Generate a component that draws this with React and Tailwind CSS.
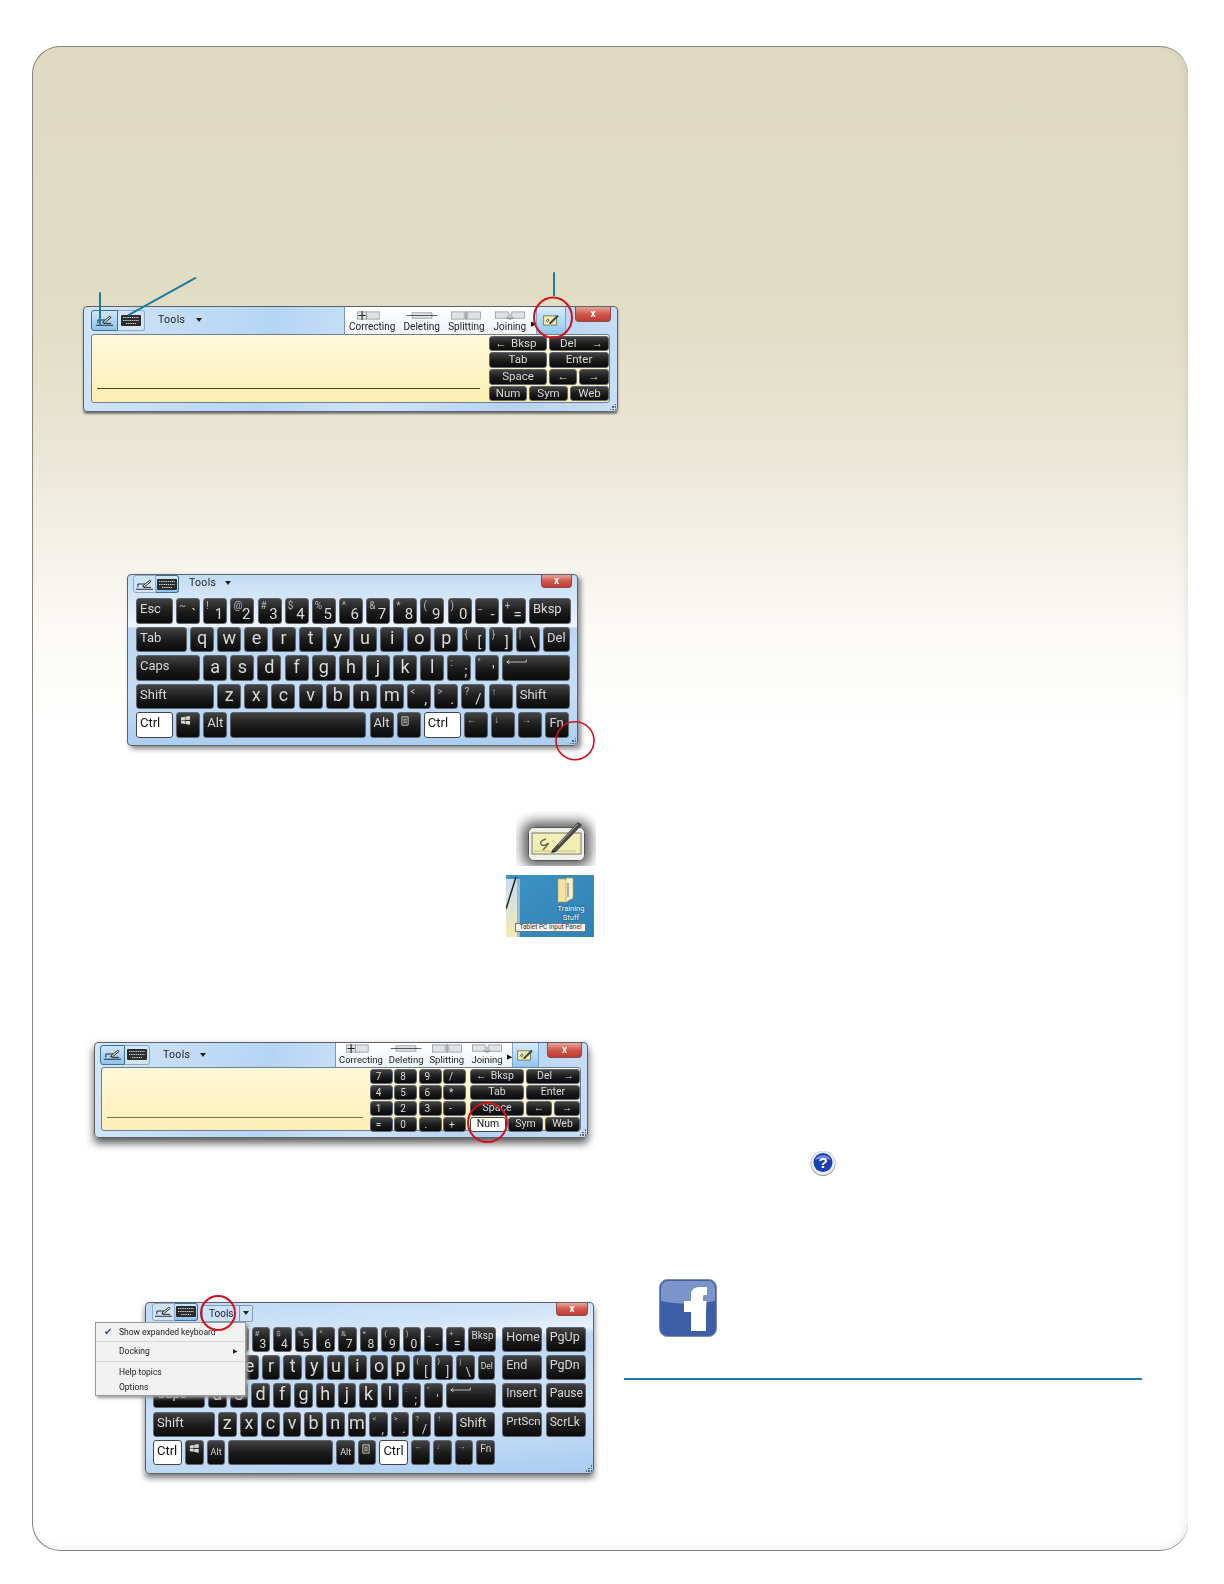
import React from 'react';

const font = "font-['Roboto','Liberation_Sans',sans-serif]";
const glass = 'bg-[linear-gradient(100deg,#d2e5f8_0%,#b5d4f4_35%,#cfe3f8_55%,#b4d3f3_80%,#c8def6_100%)]';
const keyDark = 'bg-linear-to-b from-[#434343] via-[#1d1d1d] to-[#0b0b0b] text-[#d9d9d9] border-[#5d6670]';
const keyLight = 'bg-white text-[#111] border-[#444]';

// key helpers
const W = (t, w, extra = {}) => ({ kind: 'word', t, w, ...extra });
const L = (t) => ({ kind: 'letter', t });
const P = (a, b) => ({ kind: 'pair', a, b });
const C = (t, w, extra = {}) => ({ kind: 'center', t, w, ...extra });

const WinLogo = () => (
  <svg viewBox="0 0 12 10" className="w-[11px] h-[9px]" fill="#d8d8d8">
    <path d="M1 1.6 5.4.9v3.5L1 4.7zM6 .8 11 0v4.2l-5 .2zM1 5.3l4.4.1v3.4L1 8.1zM6 5.5h5v4.3l-5-.8z" />
  </svg>
);

const MenuGlyph = () => (
  <svg viewBox="0 0 9 11" className="w-[8px] h-[10px]" fill="none" stroke="#d8d8d8">
    <path d="M1 .8h7v9.4H1zM2.5 3.5h4M2.5 5.5h4M2.5 7.5h4" />
  </svg>
);

const EnterGlyph = () => (
  <svg viewBox="0 0 26 6" className="w-[22px] h-[6px]" fill="none" stroke="#d8d8d8">
    <path d="M1 3h23V0M4 .8 1 3l3 2.2" />
  </svg>
);

const DownArrow = () => (
  <span className="w-0 h-0 border-x-[3.5px] border-t-[4px] border-x-transparent border-t-[#222]" />
);

const bigSizes = { word: 'text-[13px]', letter: 'text-[18px]', top: 'text-[10px]', bot: 'text-[15px]' };
const midSizes = { word: 'text-[13px]', letter: 'text-[18px]', top: 'text-[8px]', bot: 'text-[12px]' };

function Key({ k, h, unit, sizes }) {
  const width = k.w || unit;
  const base = `relative flex shrink-0 rounded-[3px] border leading-none overflow-hidden ${k.light ? keyLight : keyDark}`;
  if (k.kind === 'pair') {
    return (
      <div className={base} style={{ width, height: h }}>
        <span className={`absolute left-[2px] top-[2px] text-[#b5b5b5] ${sizes.top}`}>{k.a}</span>
        <span className={`absolute right-[3px] bottom-[1px] ${sizes.bot}`}>{k.b}</span>
      </div>
    );
  }
  if (k.kind === 'letter') {
    return (
      <div className={`${base} items-center justify-center pb-[3px] ${sizes.letter}`} style={{ width, height: h }}>
        {k.t}
      </div>
    );
  }
  if (k.kind === 'center') {
    return (
      <div className={`${base} items-center justify-center ${k.small || 'text-[10px]'}`} style={{ width, height: h }}>
        {k.t}
      </div>
    );
  }
  return (
    <div className={`${base} items-start ${k.pad || 'px-[3px] pt-[3px]'} ${k.small || sizes.word}`} style={{ width, height: h }}>
      {k.t}
    </div>
  );
}

function KeyRows({ rows, h, unit, gap, sizes }) {
  return (
    <div className="flex flex-col" style={{ gap: gap.y }}>
      {rows.map((row, i) => (
        <div key={i} className="flex" style={{ gap: gap.x }}>
          {row.map((k, j) => <Key key={j} k={k} h={h} unit={unit} sizes={sizes} />)}
        </div>
      ))}
    </div>
  );
}

// the five rows of the on-screen keyboard, w holds the widths that differ per window
const keyboardRows = (w) => [
  [W('Esc', w.esc), P('~', '`'), P('!', '1'), P('@', '2'), P('#', '3'), P('$', '4'), P('%', '5'), P('^', '6'), P('&', '7'), P('*', '8'), P('(', '9'), P(')', '0'), P('_', '-'), P('+', '='), W('Bksp', w.bksp, w.bkspSmall ? { small: 'text-[10px]' } : {})],
  [W('Tab', w.tab), L('q'), L('w'), L('e'), L('r'), L('t'), L('y'), L('u'), L('i'), L('o'), L('p'), P('{', '['), P('}', ']'), P('|', '\\'), W('Del', w.del, w.delSmall ? { small: 'text-[8.5px]', pad: 'px-[2px] pt-[6px]' } : {})],
  [W('Caps', w.caps), L('a'), L('s'), L('d'), L('f'), L('g'), L('h'), L('j'), L('k'), L('l'), P(':', ';'), P('"', "'"), W(<EnterGlyph />, w.enter)],
  [W('Shift', w.shift), L('z'), L('x'), L('c'), L('v'), L('b'), L('n'), L('m'), P('<', ','), P('>', '.'), P('?', '/'), P('↑', ''), W('Shift', w.shift2)],
  [W('Ctrl', w.ctrl, { light: true }), W(<WinLogo />), W('Alt', undefined, w.altSmall ? { small: 'text-[9px]', pad: 'px-[3px] pt-[7px]' } : {}), W('', w.space), W('Alt', undefined, w.altSmall ? { small: 'text-[9px]', pad: 'px-[3px] pt-[7px]' } : {}), W(<MenuGlyph />), W('Ctrl', w.ctrl, { light: true }), P('←', ''), P('↓', ''), P('→', ''), W('Fn', undefined, w.altSmall ? { small: 'text-[10px]' } : {})],
];

const PenIcon = () => (
  <svg viewBox="0 0 20 13" className="w-[19px] h-[13px]" fill="none" stroke="#222">
    <path d="M1 11.5h18M3 9.5V6h8M17 9.5H9" />
    <path d="M8 8.5 15.5 2l1.5 1.2L10 9z" fill="#fff" />
  </svg>
);

const KeyboardIcon = () => (
  <svg viewBox="0 0 20 11" className="w-[20px] h-[11px]">
    <rect width="20" height="11" rx="1" fill="#2c2c2c" />
    <path d="M2 2.5h16M2 5.5h16M5 8.5h10" stroke="#d8d8d8" strokeWidth="1.2" strokeDasharray="1.4 .8" />
  </svg>
);

function ModeButtons({ keyboard, width, height }) {
  const on = 'bg-linear-to-b from-[#cfe6fa] to-[#8ec3ec] border border-[#3f6f93]';
  const off = 'bg-[#d6e7f7]/60 border border-[#8fa9c0]';
  return (
    <div className="flex shrink-0" style={{ height }}>
      <div className={`flex items-center justify-center rounded-l-[3px] ${keyboard ? off : on}`} style={{ width }}>
        <PenIcon />
      </div>
      <div className={`flex items-center justify-center rounded-r-[3px] border-l-0 ${keyboard ? on : off}`} style={{ width }}>
        <KeyboardIcon />
      </div>
    </div>
  );
}

const ToolsLabel = ({ ml, gap }) => (
  <div className="flex items-center text-[10.5px] tracking-[0.3px] text-[#222] shrink-0" style={{ marginLeft: ml, gap }}>
    <span>Tools</span>
    <DownArrow />
  </div>
);

const CloseButton = ({ width, height, ml }) => (
  <div
    className="flex items-center justify-center shrink-0 rounded-b-[4px] border border-[#8a4b4b] border-t-0 bg-linear-to-b from-[#e6a49a] via-[#d2574c] to-[#c03a32] text-white text-[10px] font-bold leading-none"
    style={{ width, height, marginLeft: ml }}
  >
    x
  </div>
);

function GestureIcon({ type }) {
  return (
    <svg viewBox="0 0 34 10" className="w-[34px] h-[9px]" fill="#dfe3e8" stroke="#8b8f94" strokeWidth=".8">
      {type === 'correct' && (
        <g>
          <rect x="1" y="1" width="10" height="8" />
          <rect x="11" y="1" width="14" height="8" />
          <path d="M6 0v10M2 5h8" stroke="#222" strokeWidth="1.2" />
        </g>
      )}
      {type === 'delete' && (
        <g>
          <rect x="6" y="2" width="22" height="6" />
          <path d="M0 5h34" stroke="#222" />
        </g>
      )}
      {type === 'split' && (
        <g>
          <rect x="1" y="1" width="14" height="8" />
          <rect x="19" y="1" width="14" height="8" />
          <path d="M17 0v10" stroke="#222" />
        </g>
      )}
      {type === 'join' && (
        <g>
          <rect x="1" y="1" width="14" height="7" />
          <rect x="19" y="1" width="14" height="7" />
          <path d="M13 7q4 4 8 0M17 9V3" fill="none" stroke="#555" />
        </g>
      )}
    </svg>
  );
}

function GesturePanel({ width, small }) {
  const items = [['correct', 'Correcting'], ['delete', 'Deleting'], ['split', 'Splitting'], ['join', 'Joining']];
  return (
    <div className="flex items-end shrink-0 h-full bg-linear-to-b from-white to-[#edf3fa] border-l border-[#7b98b3]" style={{ width, marginLeft: 'auto' }}>
      <div className="flex flex-1 justify-around pb-[1px]">
        {items.map(([type, label]) => (
          <div key={type} className={`flex flex-col items-center gap-[1px] leading-[12px] text-[#222] ${small ? 'text-[9.5px]' : 'text-[10px]'}`}>
            <GestureIcon type={type} />
            <span>{label}</span>
          </div>
        ))}
      </div>
      <span className="text-[7px] pb-[6px] text-[#111] leading-none">▶</span>
    </div>
  );
}

const InputButton = ({ width }) => (
  <div className="flex items-center justify-center shrink-0 h-full bg-linear-to-b from-[#d8ecfc] to-[#8fc5ee] border-x border-[#7ea3c4]" style={{ width }}>
    <svg viewBox="0 0 18 13" className="w-[17px] h-[12px]">
      <rect x=".5" y="2" width="14" height="10" fill="#f7eeb0" stroke="#6f7a55" />
      <path d="M6 10 15 1l2 1.5L8 11z" fill="#444" />
      <path d="M3 8q2-4 3-2t-2 3" fill="none" stroke="#555" />
    </svg>
  </div>
);

function EditKeys({ h, gap, wBksp, wDel, wNum, wSym, wWeb, wArrowL, wArrowR, numLight, small }) {
  const size = small ? { small: 'text-[10.5px]' } : { small: 'text-[11.5px]' };
  const rows = [
    [{ kind: 'center', t: <span className="w-full flex justify-between px-[5px]"><span>←</span><span>Bksp</span><span /></span>, w: wBksp, ...size }, { kind: 'center', t: <span className="w-full flex justify-between px-[5px]"><span className="ml-[5px]">Del</span><span>→</span></span>, w: wDel, ...size }],
    [C('Tab', wBksp, size), C('Enter', wDel, size)],
    [C('Space', wBksp, size), C('←', wArrowL, size), C('→', wArrowR, size)],
    [C('Num', wNum, { ...size, light: numLight }), C('Sym', wSym, size), C('Web', wWeb, size)],
  ];
  return <KeyRows rows={rows} h={h} gap={gap} sizes={bigSizes} />;
}

function ResizeGrip() {
  return (
    <div className="absolute right-[1px] bottom-[1px] grid grid-cols-3 gap-[1px]">
      {[0, 1, 2, 3, 4, 5, 6, 7, 8].map((i) => (
        <span key={i} className={`w-[1.5px] h-[1.5px] ${[0, 1, 3].includes(i) ? '' : 'bg-[#5a6670]'}`} />
      ))}
    </div>
  );
}

const frame = `relative flex flex-col shrink-0 rounded-[4px] border border-[#5c6268] blur-[0.3px] ${font}`;

function WindowOne() {
  return (
    <div className={`${frame} w-[535px] h-[106px] ml-[50px] mt-[259px] ${glass} shadow-[0_2px_2px_#777]`}>
      <div className="flex items-center h-[26.5px] pl-[7px] pr-[6px]">
        <ModeButtons width={27} height={20.5} />
        <ToolsLabel ml={13} gap={11} />
        <GesturePanel width={192} />
        <InputButton width={30} />
        <div className="self-start"><CloseButton width={36} height={14.5} ml={9} /></div>
      </div>
      <div className="flex mx-[7px] h-[69.5px] rounded-[3px] border border-[#6d7f8f] bg-linear-to-b from-[#fff9dc] to-[#fbeeb2]">
        <div className="flex flex-1 items-end pb-[13px] pl-[5px] pr-[9px]">
          <div className="h-px w-full bg-[#4a4528]" />
        </div>
        <div className="pt-[1px] w-[120px] shrink-0">
          <EditKeys h={15.6} gap={{ x: 2, y: 1.2 }} wBksp={58} wDel={60} wArrowL={28} wArrowR={30} wNum={38} wSym={39} wWeb={39} />
        </div>
      </div>
      <ResizeGrip />
      <svg className="absolute left-0 top-0 w-px h-px overflow-visible" fill="none">
        <path d="M16 -14.7V18.3M112 -29.4 44 8.3M470 -34.7V-11" stroke="#1a7ea3" strokeWidth="2" />
        <ellipse cx="469" cy="10.6" rx="19" ry="20" stroke="#d3101f" strokeWidth="2" />
      </svg>
    </div>
  );
}

function WindowTwo() {
  const rows = keyboardRows({ esc: 37, bksp: 42, tab: 51, del: 27, caps: 64, enter: 68, shift: 78, shift2: 54, ctrl: 37, space: 136 });
  return (
    <div className={`${frame} w-[451px] h-[172px] ml-[94px] mt-[162.3px] bg-[linear-gradient(180deg,#c2dcf5_0,#d5e6f7_22px,#eef4fb_52px,#eef4fb_30%,#b9d7f4_31%,#c6def6_70%,#aacdf0_100%)] shadow-[3px_3px_5px_#888]`}>
      <div className="flex items-start h-[23px] pl-[5px] pr-[5px]">
        <ModeButtons keyboard width={23} height={18} />
        <ToolsLabel ml={10} gap={9} />
        <div className="ml-auto"><CloseButton width={31} height={13} /></div>
      </div>
      <div className="pl-[8px]">
        <KeyRows rows={rows} h={25.5} unit={24} gap={{ x: 3.15, y: 3 }} sizes={bigSizes} />
      </div>
      <ResizeGrip />
      <svg className="absolute left-0 top-0 w-px h-px overflow-visible" fill="none">
        <circle cx="447" cy="165.7" r="19" stroke="#d3101f" strokeWidth="1.6" />
      </svg>
    </div>
  );
}

function TabletIcon() {
  return (
    <div className="flex items-center justify-center shrink-0 w-[80px] h-[55px] ml-[483px] mt-[65px] overflow-hidden">
      <div className="relative w-[57px] h-[34px] mt-[10px] rounded-[6px] shadow-[0_0_12px_6px_#666]">
        <svg viewBox="0 0 57 34" className="absolute left-0 top-0 w-[57px] h-[34px] overflow-visible">
          <rect x=".5" y=".5" width="56" height="33" rx="5" fill="#eff0ea" stroke="#555" />
          <rect x="4" y="6" width="49" height="21" fill="#f3eeb4" stroke="#777" />
          <path d="M18 12q-7 2-5 5t6 0-4 6" fill="none" stroke="#6c6a55" strokeWidth="1.5" />
          <path d="M6 24h42" stroke="#c4bd86" />
          <path d="M25 22 50-5l4 3-26 27z" fill="#4a4a4a" />
          <path d="M30 18 50-3" stroke="#aaa" />
          <path d="M25 22l3 3-5 1z" fill="#222" />
        </svg>
      </div>
    </div>
  );
}

function DesktopThumb() {
  return (
    <div className={`relative shrink-0 w-[88px] h-[62px] ml-[473px] mt-[9px] overflow-hidden bg-linear-to-br from-[#3f92c4] to-[#2f82b6] ${font}`}>
      <div className="absolute left-0 top-[4px] w-[14px] h-[58px] bg-linear-to-b from-[#c8def0] to-[#f3e9b0] border-r-[3px] border-[#9db8cc]" />
      <svg className="absolute left-0 top-0 w-[88px] h-[62px]" fill="none">
        <path d="M10 2 0 34" stroke="#222" strokeWidth="1.5" />
        <path d="M52 4h7l2 2v21H52z" fill="#f2e3a0" stroke="#b99f55" strokeWidth=".6" />
        <path d="M60 3h7v20l-7 4z" fill="#f8f1cc" stroke="#b99f55" strokeWidth=".6" />
        <path d="M62 8v14" stroke="#666" />
      </svg>
      <div className="absolute left-[46px] top-[29px] w-[38px] text-center text-[7.5px] leading-[9px] text-white [text-shadow:0_0_2px_#123]">
        Training Stuff
      </div>
      <div className="absolute left-[9px] top-[48px] w-[71px] h-[9px] bg-[#f3f3f0] border border-[#777] text-[6.5px] leading-[7px] text-center text-[#333] whitespace-nowrap">
        Tablet PC Input Panel
      </div>
    </div>
  );
}

function WindowThree() {
  const numKey = (t) => W(t, 23, { small: 'text-[10px]', pad: 'pl-[5px] pt-[2px]' });
  const pad = [
    ['7', '8', '9', '/'].map(numKey),
    ['4', '5', '6', '*'].map(numKey),
    ['1', '2', '3', '-'].map(numKey),
    ['=', '0', '.', '+'].map(numKey),
  ];
  return (
    <div className={`${frame} w-[494px] h-[96px] ml-[61px] mt-[104.7px] ${glass} shadow-[0_5px_9px_#555]`}>
      <div className="flex items-center h-[24px] pl-[5px] pr-[5px]">
        <ModeButtons width={25} height={20} />
        <ToolsLabel ml={13} gap={10} />
        <GesturePanel small width={177} />
        <InputButton width={27} />
        <div className="self-start"><CloseButton width={35} height={15} ml={8} /></div>
      </div>
      <div className="flex mx-[6px] h-[64px] rounded-[3px] border border-[#6d7f8f] bg-linear-to-b from-[#fff8d8] to-[#fbeeb6]">
        <div className="flex flex-1 items-end pb-[12px] pl-[5px] pr-[7px]">
          <div className="h-px w-full bg-[#7a7244]" />
        </div>
        <div className="pt-[1px] shrink-0 mr-[4px]">
          <KeyRows rows={pad} h={15} gap={{ x: 1.4, y: 1 }} sizes={bigSizes} />
        </div>
        <div className="pt-[1px] w-[110px] shrink-0">
          <EditKeys small numLight h={15} gap={{ x: 2, y: 1 }} wBksp={54} wDel={54} wArrowL={26} wArrowR={26} wNum={36} wSym={35} wWeb={35} />
        </div>
      </div>
      <ResizeGrip />
      <svg className="absolute left-0 top-0 w-px h-px overflow-visible" fill="none">
        <circle cx="392.5" cy="79.6" r="19.5" stroke="#d3101f" strokeWidth="2" />
      </svg>
    </div>
  );
}

function ToolsMenu() {
  return (
    <div className="absolute left-[-51px] top-[19px] w-[151px] h-[74px] flex flex-col bg-[#f1f1f1] border border-[#9a9a9a] shadow-[2px_2px_3px_#999] text-[8.5px] leading-[10px] text-[#222]">
      <div className="flex items-center h-[19px] border-b border-[#d8d8d8]">
        <span className="w-[23px] text-center text-[#2a3f9a] text-[10px]">✔</span>
        <span>Show expanded keyboard</span>
      </div>
      <div className="flex items-center h-[20px] border-b border-[#d8d8d8]">
        <span className="w-[23px]" />
        <span>Docking</span>
        <span className="ml-auto mr-[7px] text-[6px]">▶</span>
      </div>
      <div className="flex items-center h-[16px] mt-[2px]">
        <span className="w-[23px]" />
        <span>Help topics</span>
      </div>
      <div className="flex items-center h-[14px]">
        <span className="w-[23px]" />
        <span>Options</span>
      </div>
    </div>
  );
}

function WindowFour() {
  const rows = keyboardRows({ esc: 30.8, bksp: 28.7, bkspSmall: true, tab: 41, del: 17.6, delSmall: true, caps: 52, enter: 50.7, shift: 62, shift2: 39.5, ctrl: 29, space: 105, altSmall: true });
  // the first keys of the top rows sit under the open menu, so they show no legend
  rows[0] = rows[0].map((k, i) => (i < 4 ? W('', i === 0 ? k.w : undefined) : k));
  rows[1] = rows[1].map((k, i) => (i < 3 ? W('', i === 0 ? k.w : undefined) : k));
  const nav = [
    [W('Home', 40, { small: 'text-[12.5px]' }), W('PgUp', 40, { small: 'text-[12.5px]' })],
    [W('End', 40, { small: 'text-[12.5px]' }), W('PgDn', 40, { small: 'text-[12.5px]' })],
    [W('Insert', 40, { small: 'text-[12px]' }), W('Pause', 40, { small: 'text-[12px]' })],
    [W('PrtScn', 40, { small: 'text-[11.5px]' }), W('ScrLk', 40, { small: 'text-[12px]' })],
  ];
  return (
    <div className={`${frame} w-[449px] h-[172px] ml-[112px] mt-[163.6px] bg-[linear-gradient(175deg,#bcd9f5_0,#d0e4f8_20%,#e9f1fa_30%,#bad8f5_33%,#cfe3f8_65%,#a9ccf0_100%)] shadow-[0_4px_6px_#777]`}>
      <div className="flex items-start h-[24px] pl-[6px] pr-[5px]">
        <ModeButtons keyboard width={23} height={18} />
        <div className="flex items-center h-[17px] ml-[4px] mt-[2px] rounded-[2px] border border-[#7e9ab5] bg-[#cfe2f5]/70 text-[10px] text-[#222]">
          <span className="px-[6px] border-r border-[#7e9ab5]">Tools</span>
          <span className="flex items-center px-[3px]"><DownArrow /></span>
        </div>
        <div className="ml-auto"><CloseButton width={32} height={13} /></div>
      </div>
      <div className="flex pl-[7px]">
        <KeyRows rows={rows} h={25} unit={18.6} gap={{ x: 3, y: 3.4 }} sizes={midSizes} />
        <div className="ml-[6px]">
          <KeyRows rows={nav} h={25} gap={{ x: 3.5, y: 3.4 }} sizes={midSizes} />
        </div>
      </div>
      <ResizeGrip />
      <ToolsMenu />
      <svg className="absolute left-0 top-0 w-px h-px overflow-visible" fill="none">
        <circle cx="72" cy="10" r="17" stroke="#d3101f" strokeWidth="2" />
      </svg>
    </div>
  );
}

function HelpIcon() {
  return (
    <svg viewBox="0 0 26 26" className="w-[26px] h-[26px] ml-[186px] mt-[1102.5px] shrink-0">
      <circle cx="13" cy="13.5" r="12.5" fill="#8a8f96" />
      <circle cx="13" cy="13" r="12" fill="#e6edf5" />
      <circle cx="13" cy="12.5" r="9.5" fill="#1b3fb5" />
      <path d="M5 10a8.5 7 0 0 1 16 0q-8-3-16 0z" fill="#6f8be0" />
      <text x="13" y="18" textAnchor="middle" fontSize="15" fontWeight="700" fill="#fff" fontFamily="Liberation Sans, sans-serif">?</text>
    </svg>
  );
}

function FacebookIcon() {
  return (
    <svg viewBox="0 0 58 58" className="w-[58px] h-[58px] ml-[35px] mt-[103.5px] shrink-0">
      <rect x=".5" y=".5" width="57" height="57" rx="8" fill="#3e5fa8" stroke="#7d8da8" />
      <path d="M2 9a7 7 0 0 1 7-7h40a7 7 0 0 1 7 7v13q-27 6-54 0z" fill="#7b95cb" />
      <path d="M32 52V33H25V22h7v-6q0-8 9-8h7v8h-3q-1 0-1 2v4h3.5l-.5 11H47v19z" fill="#fff" />
    </svg>
  );
}

export default function App() {
  return (
    <div className="w-[1224px] h-[1584px] bg-white pt-[46px] pl-[32px]">
      <div className="flex w-[1156px] h-[1505px] rounded-[28px] border-[1.5px] border-r-0 border-[#85857c] bg-[linear-gradient(180deg,#dfdac1_0,#e2ddc5_18%,#e8e4d1_25%,#f3f1e8_33%,#fbfaf6_39%,#ffffff_45%)] shadow-[inset_-8px_0_10px_-6px_rgba(0,0,0,0.08),inset_0_-8px_10px_-6px_rgba(0,0,0,0.06)]">
        <div className="flex flex-col w-[590px] shrink-0">
          <WindowOne />
          <WindowTwo />
          <TabletIcon />
          <DesktopThumb />
          <WindowThree />
          <WindowFour />
        </div>
        <div className="flex flex-col w-[518px] ml-[1px]">
          <HelpIcon />
          <FacebookIcon />
          <div className="h-[2px] w-[518px] mt-[41px] bg-[#1a7ea3]" />
        </div>
      </div>
    </div>
  );
}
